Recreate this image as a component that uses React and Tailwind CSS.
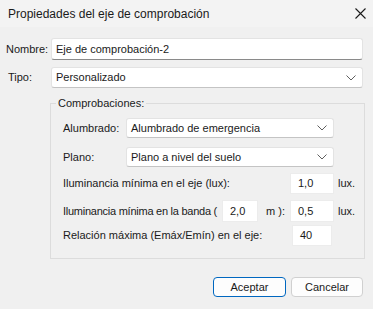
import React from 'react';

const Chevron = () => (
  <svg width="10" height="6" viewBox="0 0 10 6" className="shrink-0">
    <path d="M0.5 0.5 L5 5 L9.5 0.5" fill="none" stroke="#5f5f5f" strokeWidth="1" />
  </svg>
);

const Select = ({ value, className }) => (
  <div className={`flex items-center justify-between bg-white border border-[#e3e3e3] border-b-[#c4c4c4] rounded-[3px] pl-[4px] pr-[6px] ${className}`}>
    <span>{value}</span>
    <Chevron />
  </div>
);

const NumInput = ({ value, className }) => (
  <div className={`flex items-center bg-white border border-[#ececec] pl-[7px] ${className}`}>
    {value}
  </div>
);

export default function App() {
  return (
    <div className="w-[373px] h-[309px] bg-[#f0f0f0] text-[11px] text-[#1a1a1a] font-['Liberation_Sans',sans-serif] leading-none whitespace-nowrap overflow-hidden">
      <div className="h-[27px] bg-[#f3f3f3] flex items-center justify-between pl-[8px] pr-[7px]">
        <span className="text-[12px]">Propiedades del eje de comprobación</span>
        <svg width="11" height="11" viewBox="0 0 11 11">
          <path d="M0.5 0.5 L10.5 10.5 M10.5 0.5 L0.5 10.5" stroke="#1a1a1a" strokeWidth="1.1" />
        </svg>
      </div>

      <div className="flex items-center mt-[11px]">
        <span className="w-[51px] pl-[6px]">Nombre:</span>
        <div className="w-[312px] h-[22px] flex items-center bg-white border border-[#e3e3e3] border-b-[#8a8a8a] rounded-[3px] pl-[4px]">
          Eje de comprobación-2
        </div>
      </div>

      <div className="flex items-center mt-[7px]">
        <span className="w-[51px] pl-[8px]">Tipo:</span>
        <Select value="Personalizado" className="w-[312px] h-[21px]" />
      </div>

      <fieldset className="ml-[50px] w-[315px] h-[164px] mt-[7px] border border-[#dcdcdc]">
        <legend className="ml-[5px] px-[2px] leading-[16px]">Comprobaciones:</legend>
        <div className="flex items-center mt-[7px]">
          <span className="w-[75px] pl-[12px]">Alumbrado:</span>
          <Select value="Alumbrado de emergencia" className="w-[208px] h-[20px]" />
        </div>
        <div className="flex items-center mt-[9px]">
          <span className="w-[75px] pl-[12px]">Plano:</span>
          <Select value="Plano a nivel del suelo" className="w-[208px] h-[20px]" />
        </div>
        <div className="flex items-center mt-[6px]">
          <span className="w-[239px] pl-[12px]">Iluminancia mínima en el eje (lux):</span>
          <NumInput value="1,0" className="w-[44px] h-[21px]" />
          <span className="ml-[4px]">lux.</span>
        </div>
        <div className="flex items-center mt-[6px]">
          <span className="w-[171px] pl-[12px] tracking-[-0.25px]">Iluminancia mínima en la banda (</span>
          <NumInput value="2,0" className="w-[36px] h-[22px] pl-[4px]" />
          <span className="w-[32px] pl-[8px]">m ):</span>
          <NumInput value="0,5" className="w-[44px] h-[22px] pl-[5px]" />
          <span className="ml-[4px]">lux.</span>
        </div>
        <div className="flex items-center mt-[3px]">
          <span className="w-[241px] pl-[12px]">Relación máxima (Emáx/Emín) en el eje:</span>
          <NumInput value="40" className="w-[40px] h-[21px] pl-[6px]" />
        </div>
      </fieldset>

      <div className="flex justify-end gap-[5px] pr-[10px] mt-[18px]">
        <button className="w-[73px] h-[20px] bg-[#fdfdfd] border border-[#0067c0] rounded-[4px]">Aceptar</button>
        <button className="w-[72px] h-[20px] bg-[#fdfdfd] border border-[#d0d0d0] rounded-[4px]">Cancelar</button>
      </div>
    </div>
  );
}
